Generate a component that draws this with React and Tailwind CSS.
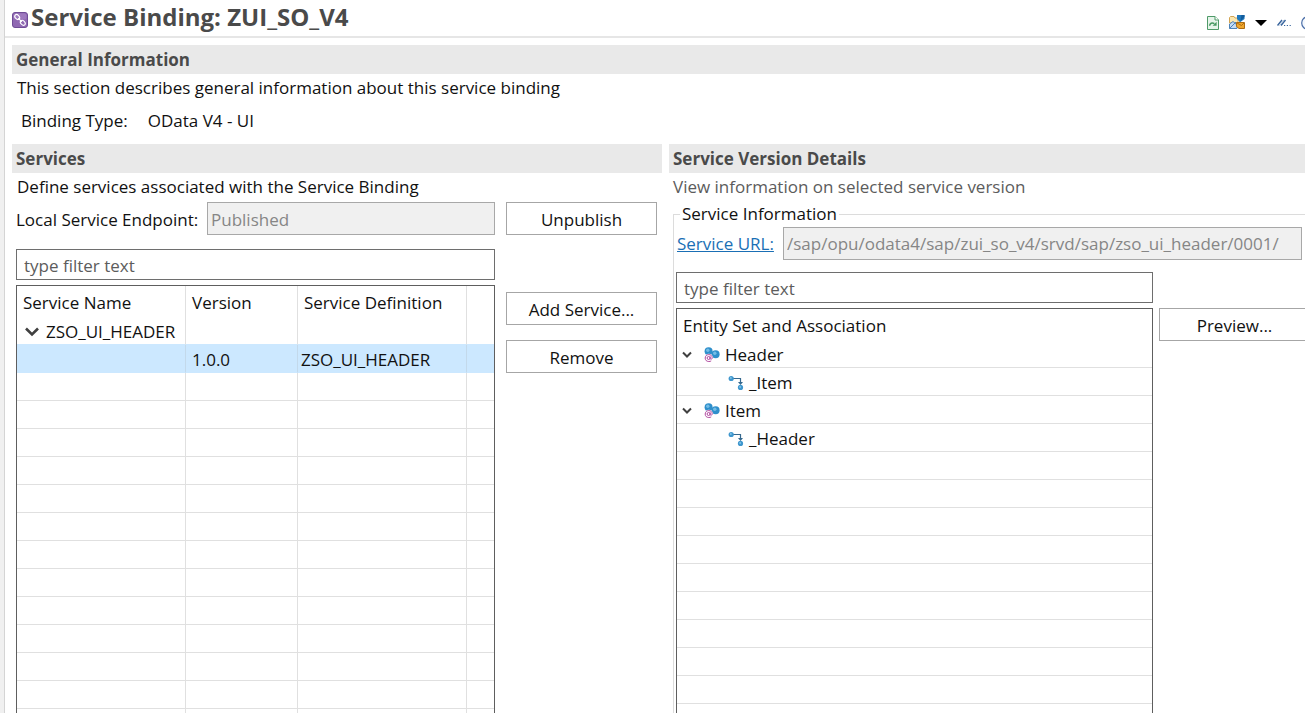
import React from "react";

function BindingIcon() {
  return (
    <svg width="16" height="16" viewBox="0 0 16 16" aria-hidden="true">
      <rect x="0.5" y="0.5" width="15" height="15" rx="2.5" fill="#8f68b2" stroke="#6f4c96" />
      <rect x="1.5" y="1.5" width="13" height="6" rx="2" fill="#a886c6" opacity="0.6" />
      <g fill="none" stroke="#fff" strokeWidth="1.1">
        <ellipse cx="5.2" cy="5" rx="2.8" ry="2" transform="rotate(45 5.2 5)" />
        <ellipse cx="10.8" cy="10.8" rx="2.8" ry="2" transform="rotate(45 10.8 10.8)" />
        <path d="M6.2 6.2 9.8 9.8" />
      </g>
    </svg>
  );
}

function RefreshIcon() {
  return (
    <svg width="12" height="14" viewBox="0 0 12 14" aria-hidden="true">
      <path d="M0.5 0.5H8L11.5 4V13.5H0.5Z" fill="#e6f4ea" stroke="#4f9a68" />
      <path d="M8 0.5V4H11.5" fill="#fff" stroke="#4f9a68" />
      <path d="M2.6 9.8C2.8 7.2 5 6.2 7.4 7.6" fill="none" stroke="#469860" strokeWidth="1.5" />
      <path d="M9.6 5.8V9.8H5.6Z" fill="#469860" />
    </svg>
  );
}

function FolderIcon() {
  return (
    <svg width="16" height="15" viewBox="0 0 16 15" aria-hidden="true">
      <path d="M0.5 2.5 1.5 1.5H5L6 3H9V8H0.5Z" fill="#fbe7b0" stroke="#d3a452" />
      <path d="M0.5 13.5V9L4 6.5 8 10V13.5Z" fill="#c5dbf2" stroke="#4d82b8" />
      <path d="M0.5 13.5 7 7" stroke="#4d82b8" />
      <path d="M8 0H15.5V4L11 7.2 8 4Z" fill="#1f78bd" />
      <path d="M12.5 0H15.5V2L11.5 6Z" fill="#135c9b" />
      <path d="M7.5 7.5H15.5V13.5H10L7.5 11.5Z" fill="#efa62c" stroke="#ad6c12" />
      <path d="M8 8 12.5 10.5 15 8" fill="none" stroke="#ad6c12" />
    </svg>
  );
}

function TriangleIcon() {
  return (
    <svg width="12" height="6" viewBox="0 0 12 6" aria-hidden="true">
      <path d="M0 0H12L6 6Z" fill="#000" />
    </svg>
  );
}

function SlashesIcon() {
  return (
    <svg width="14" height="8" viewBox="0 0 14 8" aria-hidden="true">
      <path d="M0.5 6.5 5 1M4 6.5 8.5 1" stroke="#38649c" strokeWidth="1.4" />
      <path d="M2.5 6.5 7 1" stroke="#8fadd0" strokeWidth="0.8" />
      <path d="M7 6.5H8.2M9.8 6.5H11M12.6 6.5H13.8" stroke="#38649c" strokeWidth="1.2" />
    </svg>
  );
}

function HelpIcon() {
  return (
    <svg width="14" height="14" viewBox="0 0 14 14" aria-hidden="true">
      <circle cx="7" cy="7" r="6.3" fill="#f4f8fd" stroke="#4a6ea8" strokeWidth="1.2" />
    </svg>
  );
}

function LargeChevron() {
  return (
    <svg width="14" height="10" viewBox="0 0 14 10" aria-hidden="true">
      <path d="M1 1.5 7 7.5 13 1.5" fill="none" stroke="#404040" strokeWidth="2.6" />
    </svg>
  );
}

function SmallChevron() {
  return (
    <svg width="10" height="8" viewBox="0 0 10 8" aria-hidden="true">
      <path d="M1 1.5 5 5.5 9 1.5" fill="none" stroke="#404040" strokeWidth="2" />
    </svg>
  );
}

function EntityIcon() {
  return (
    <svg width="16" height="16" viewBox="0 0 16 16" aria-hidden="true">
      <circle cx="4.6" cy="4.2" r="4" fill="#2f8fcb" />
      <circle cx="3.8" cy="3.2" r="1.7" fill="#72bce6" />
      <circle cx="11.6" cy="7.2" r="4" fill="#2f8fcb" />
      <circle cx="10.8" cy="6.2" r="1.7" fill="#72bce6" />
      <circle cx="4.8" cy="11" r="4.2" fill="#fff" />
      <circle cx="4.6" cy="11" r="1.5" fill="none" stroke="#b0489f" strokeWidth="1" />
      <path d="M6.2 9.4V11.6C6.4 12.8 8.2 12.4 8.2 10.8C8.2 8.8 6.8 7.6 4.8 7.6C2.6 7.6 1.2 9 1.2 11.1C1.2 13.2 2.6 14.5 4.8 14.5C5.8 14.5 6.6 14.3 7.2 13.9" fill="none" stroke="#b0489f" strokeWidth="1" />
    </svg>
  );
}

function AssociationIcon() {
  return (
    <svg width="16" height="16" viewBox="0 0 16 16" aria-hidden="true">
      <path d="M4 3.5H12.5V9" fill="none" stroke="#35688e" strokeWidth="1.2" />
      <path d="M10 7H15L12.5 10Z" fill="#35688e" />
      <circle cx="3.2" cy="3.5" r="2.6" fill="#3e96cd" />
      <circle cx="2.8" cy="3" r="1" fill="#82c3e8" />
      <circle cx="12.5" cy="12.4" r="2.6" fill="#3e96cd" />
      <circle cx="12.1" cy="11.9" r="1" fill="#82c3e8" />
    </svg>
  );
}

function SectionTitle({ children }) {
  return (
    <h2 className="h-[29px] shrink-0 bg-[#e9e9e9] px-1 text-[17px] leading-[29px] font-bold text-[#4a4a4a]">
      {children}
    </h2>
  );
}

function Button({ children }) {
  return (
    <button
      type="button"
      className="h-[33px] w-[151px] shrink-0 border border-[#a6a6a6] bg-white pt-0.5 text-center text-[17px] leading-6"
    >
      {children}
    </button>
  );
}

function FilterInput({ label }) {
  return (
    <input
      type="text"
      aria-label={label}
      placeholder="type filter text"
      className="h-[31px] w-full min-w-0 shrink-0 border border-[#6e6e6e] bg-white px-[7px] pt-0.5 text-[17px] leading-6 placeholder:text-[#5c5c5c]"
    />
  );
}

const serviceRows = [
  { name: "ZSO_UI_HEADER", expandable: true },
  { version: "1.0.0", definition: "ZSO_UI_HEADER", selected: true },
  ...Array.from({ length: 14 }, () => ({})),
];

const entityRows = [
  { label: "Header", kind: "entity" },
  { label: "_Item", kind: "association" },
  { label: "Item", kind: "entity" },
  { label: "_Header", kind: "association" },
  ...Array.from({ length: 12 }, () => ({})),
];

function serviceRowClass(row) {
  if (row.selected) return "h-7 bg-[#cce8ff] *:border-r-[#c3d9eb] *:border-b-[#cce8ff]";
  if (row.expandable) return "h-7 *:border-r-[#e0e0e0] *:border-b-[#cce8ff]";
  return "h-7 *:border-[#e0e0e0]";
}

function ServicesTable() {
  return (
    <div className="min-h-0 flex-1 overflow-hidden border border-[#5e5e5e]">
      <table className="w-full table-fixed border-separate border-spacing-0 text-left text-[17px] leading-6">
        <colgroup>
          <col className="w-[169px]" />
          <col className="w-[112px]" />
          <col className="w-[169px]" />
          <col />
        </colgroup>
        <thead>
          <tr className="h-[31px]">
            <th className="border-r border-[#e0e0e0] px-1.5 pt-0.5 pb-0 font-normal">Service Name</th>
            <th className="border-r border-[#e0e0e0] px-1.5 pt-0.5 pb-0 font-normal">Version</th>
            <th className="border-r border-[#e0e0e0] px-1.5 pt-0.5 pb-0 font-normal whitespace-nowrap">Service Definition</th>
            <th className="p-0" />
          </tr>
        </thead>
        <tbody>
          {serviceRows.map((row, i) => (
            <tr key={i} className={serviceRowClass(row)}>
              <td className="border-r border-b px-0 pt-0.5 pb-0">
                {row.expandable && (
                  <div className="flex items-center gap-[7px] pl-2 whitespace-nowrap">
                    <LargeChevron />
                    {row.name}
                  </div>
                )}
              </td>
              <td className="border-r border-b px-1.5 pt-0.5 pb-0">{row.version}</td>
              <td className="border-r border-b px-[3px] pt-0.5 pb-0 whitespace-nowrap">{row.definition}</td>
              <td className="border-b p-0" />
            </tr>
          ))}
        </tbody>
      </table>
    </div>
  );
}

function EntityTable() {
  return (
    <div className="min-h-0 flex-1 overflow-hidden border border-[#5e5e5e]">
      <table className="w-full table-fixed border-separate border-spacing-0 text-left text-[17px] leading-6">
        <thead>
          <tr className="h-[31px]">
            <th className="px-1.5 pt-0.5 pb-0 font-normal">Entity Set and Association</th>
          </tr>
        </thead>
        <tbody>
          {entityRows.map((row, i) => (
            <tr key={i} className="h-7">
              <td className="border-b border-[#e0e0e0] px-0 pt-0.5 pb-0">
                {row.kind === "entity" && (
                  <div className="flex items-center pl-[5px]">
                    <SmallChevron />
                    <span className="pr-[5px] pl-3">
                      <EntityIcon />
                    </span>
                    {row.label}
                  </div>
                )}
                {row.kind === "association" && (
                  <div className="flex items-center gap-[5px] pl-[51px]">
                    <AssociationIcon />
                    {row.label}
                  </div>
                )}
              </td>
            </tr>
          ))}
        </tbody>
      </table>
    </div>
  );
}

export default function App() {
  return (
    <div className="flex h-screen overflow-hidden bg-white font-['Open_Sans','Noto_Sans',sans-serif] text-[17px] leading-6 text-[#111]">
      <div className="w-[5px] shrink-0 border-r border-[#d4d4d4] bg-[#f0f0f0]" />
      <main className="flex min-w-0 flex-1 flex-col">
        <header className="flex h-[38px] shrink-0 items-start border-b-2 border-[#e6e6e6] pl-[7px]">
          <span className="mt-3">
            <BindingIcon />
          </span>
          <h1 className="pl-[3px] text-2xl leading-[33px] font-bold text-[#4a4a4a]">Service Binding: ZUI_SO_V4</h1>
          <div className="mt-[15px] -mr-2.5 ml-auto flex h-[15px] items-center gap-2.5">
            <button type="button" aria-label="Refresh">
              <RefreshIcon />
            </button>
            <button type="button" aria-label="Open folder">
              <FolderIcon />
            </button>
            <button type="button" aria-label="More actions">
              <TriangleIcon />
            </button>
            <button type="button" aria-label="Options">
              <SlashesIcon />
            </button>
            <button type="button" aria-label="Help">
              <HelpIcon />
            </button>
          </div>
        </header>

        <section className="mt-[7px] shrink-0 pl-[7px]">
          <SectionTitle>General Information</SectionTitle>
          <p className="mt-0.5 pl-[5px]">This section describes general information about this service binding</p>
          <dl className="mt-[9px] flex gap-5 pl-[9px]">
            <dt>Binding Type:</dt>
            <dd>OData V4 - UI</dd>
          </dl>
        </section>

        <div className="mt-[11px] grid min-h-0 flex-1 grid-cols-[650fr_636fr] grid-rows-[minmax(0,1fr)] gap-[7px] pl-[7px]">
          <section className="flex min-w-0 flex-col">
            <SectionTitle>Services</SectionTitle>
            <p className="mt-0.5 pl-[5px]">Define services associated with the Service Binding</p>
            <div className="mt-[3px] flex items-center pr-[5px] pl-1">
              <label htmlFor="endpoint" className="w-[191px] shrink-0 pt-0.5 whitespace-nowrap">
                Local Service Endpoint:
              </label>
              <input
                id="endpoint"
                type="text"
                disabled
                defaultValue="Published"
                className="mr-[11px] h-[33px] min-w-0 flex-1 border border-[#a8a8a8] bg-[#f0f0f0] px-[3px] pt-0.5 text-[17px] leading-6 text-[#868686]"
              />
              <Button>Unpublish</Button>
            </div>
            <div className="mt-3.5 flex min-h-0 flex-1 gap-[11px] pr-[5px] pl-1">
              <div className="-mb-px flex min-w-0 flex-1 flex-col gap-[5px]">
                <FilterInput label="Filter services" />
                <ServicesTable />
              </div>
              <div className="flex flex-col gap-[15px] pt-[43px]">
                <Button>Add Service...</Button>
                <Button>Remove</Button>
              </div>
            </div>
          </section>

          <section className="flex min-w-0 flex-col">
            <SectionTitle>Service Version Details</SectionTitle>
            <p className="mt-0.5 pl-1 text-[#5c5c5c]">View information on selected service version</p>
            <fieldset className="-mr-1.5 -mb-px ml-1 flex min-h-0 min-w-0 flex-1 flex-col border border-[#dcdcdc] pl-0.5">
              <legend className="ml-1 px-0.5 leading-[30px]">Service Information</legend>
              <div className="-mt-0.5 flex items-center pr-2">
                <a href="#service-url" id="url-label" className="w-[107px] shrink-0 pl-px whitespace-nowrap text-[#1a6fb5] underline">
                  Service URL:
                </a>
                <input
                  type="text"
                  disabled
                  aria-labelledby="url-label"
                  defaultValue="/sap/opu/odata4/sap/zui_so_v4/srvd/sap/zso_ui_header/0001/"
                  className="h-[33px] min-w-0 flex-1 border border-[#a8a8a8] bg-[#f0f0f0] px-[3px] text-[17px] leading-6 text-[#868686]"
                />
              </div>
              <div className="mt-3 flex min-h-0 flex-1 gap-1.5">
                <div className="-mb-px flex min-w-0 flex-1 flex-col gap-[5px]">
                  <FilterInput label="Filter entity sets" />
                  <EntityTable />
                </div>
                <div className="pt-9">
                  <Button>Preview...</Button>
                </div>
              </div>
            </fieldset>
          </section>
        </div>
      </main>
    </div>
  );
}
